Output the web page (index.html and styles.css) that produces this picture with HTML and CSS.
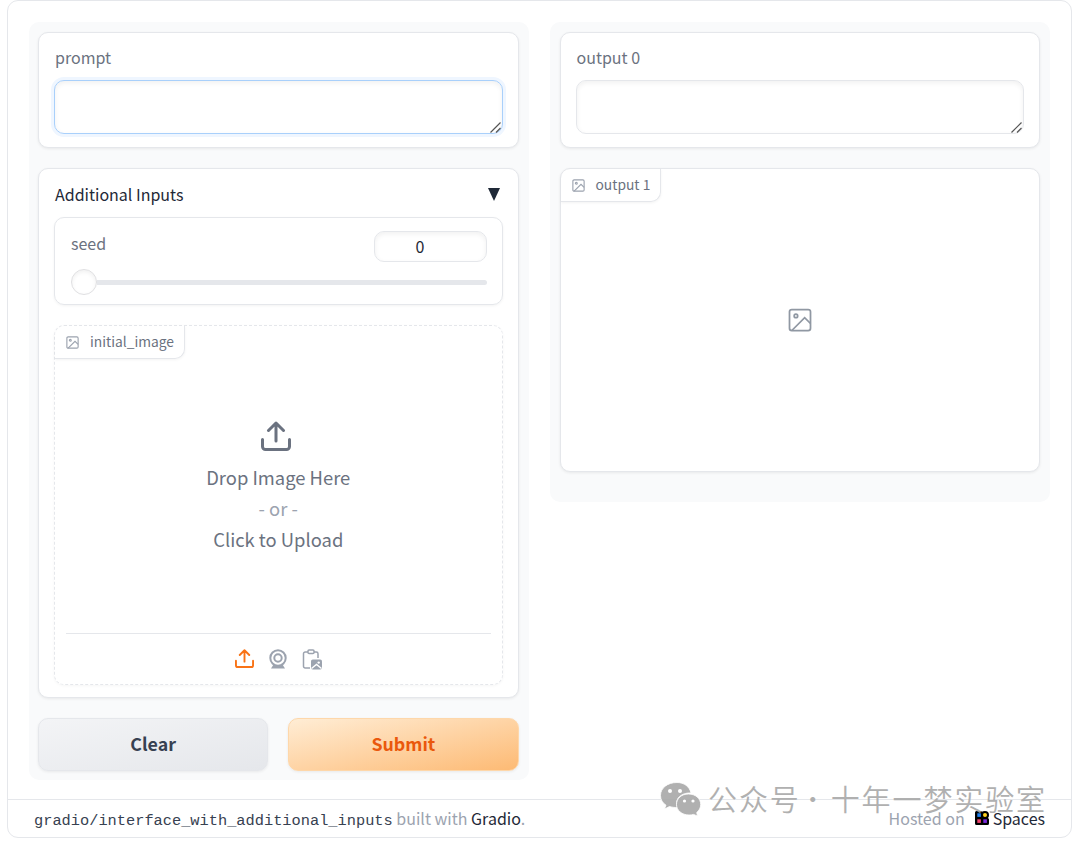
FILE: index.html
```html
<!DOCTYPE html>
<html lang="en">
<head>
    <meta charset="UTF-8">
    <meta name="viewport" content="width=device-width, initial-scale=1.0">
    <title>Interface with additional inputs</title>
    <link rel="stylesheet" href="styles.css">
</head>
<body>

    <!-- Shared icons -->
    <svg class="sprite" width="0" height="0">
        <symbol id="icon-image" viewBox="0 0 24 24">
            <rect x="3" y="3" width="18" height="18" rx="2"/>
            <circle cx="8.5" cy="8.5" r="1.5"/>
            <path d="M21 15l-5-5L5 21"/>
        </symbol>
        <symbol id="icon-upload" viewBox="0 0 30 30">
            <path d="M1.5 18.5v7a3 3 0 0 0 3 3h21a3 3 0 0 0 3-3v-7M15 20V2M7.5 9.500L15 2l7.500 7.500"/>
        </symbol>
        <symbol id="icon-grip" viewBox="0 0 11 11">
            <path d="M.5 10.500l10-10M6 10.500l4.500-4.500"/>
        </symbol>
    </svg>

    <div class="app">
        <main class="columns">
            <section class="panel">
                <div class="block text-block">
                    <label class="label" for="prompt">prompt</label>
                    <div class="field">
                        <textarea id="prompt" class="textbox focused"></textarea>
                        <svg class="grip"><use href="#icon-grip"/></svg>
                    </div>
                </div>

                <div class="block accordion">
                    <div class="accordion-head">
                        <span>Additional Inputs</span>
                        <span class="arrow"></span>
                    </div>

                    <div class="seed">
                        <div class="seed-head">
                            <span class="label">seed</span>
                            <span class="number">0</span>
                        </div>
                        <div class="slider"><span class="thumb"></span><span class="track"></span></div>
                    </div>

                    <div class="upload">
                        <div class="tag">
                            <svg class="tag-icon"><use href="#icon-image"/></svg>
                            <span>initial_image</span>
                        </div>
                        <div class="drop">
                            <svg class="drop-icon"><use href="#icon-upload"/></svg>
                            <span>Drop Image Here</span>
                            <span class="or">- or -</span>
                            <span>Click to Upload</span>
                        </div>
                        <div class="sources">
                            <svg class="source active" viewBox="0 0 30 30"><use href="#icon-upload"/></svg>
                            <svg class="source webcam" viewBox="0 0 20 20">
                                <circle cx="10" cy="9" r="7.700"/>
                                <circle cx="10" cy="9" r="3.700"/>
                                <path class="solid" d="M5.500 15.500Q10 18 14.500 15.500L17 19.500H3z"/>
                            </svg>
                            <svg class="source clipboard" viewBox="0 0 20 20">
                                <path d="M6 3H3.200A1.700 1.700 0 0 0 1.500 4.700v12.600A1.700 1.700 0 0 0 3.200 19H8M12 3h2.300A1.700 1.700 0 0 1 16 4.700V9"/>
                                <rect x="6" y="1" width="6" height="3.500" rx="1"/>
                                <rect class="solid" x="9" y="10.500" width="11" height="10" rx="1.800"/>
                                <circle class="hole" cx="16.700" cy="13.600" r="1.200"/>
                                <path class="hole-line" d="M9.500 19.500l5-4 5 4"/>
                            </svg>
                        </div>
                    </div>
                </div>

                <div class="buttons">
                    <button class="btn clear">Clear</button>
                    <button class="btn submit">Submit</button>
                </div>
            </section>

            <section class="panel outputs">
                <div class="block text-block">
                    <label class="label" for="output">output 0</label>
                    <div class="field">
                        <textarea id="output" class="textbox" readonly></textarea>
                        <svg class="grip"><use href="#icon-grip"/></svg>
                    </div>
                </div>
                <div class="block output-image">
                    <div class="tag">
                        <svg class="tag-icon"><use href="#icon-image"/></svg>
                        <span>output 1</span>
                    </div>
                    <div class="empty">
                        <svg class="empty-icon"><use href="#icon-image"/></svg>
                    </div>
                </div>
            </section>
        </main>

        <footer class="footer">
            <div class="built"><span class="repo">gradio/interface_with_additional_inputs</span> <span>built with <b>Gradio</b>.</span></div>
            <div class="hosted">
                <span>Hosted on</span>
                <svg class="spaces-logo" viewBox="0 0 14 14">
                    <path d="M1.500 0H6l1 .8L8 .3q6-1 6 3.700 0 2-1 3 1 .5 1 1.500v4q0 1.500-1.500 1.500h-11Q0 14 0 12.500v-11Q0 0 1.500 0z" fill="#000"/>
                    <rect x="2.300" y="2.300" width="3.600" height="3.600" fill="#1f80f0"/>
                    <circle cx="10" cy="4" r="2" fill="#ffd21e"/>
                    <rect x="2.300" y="8.300" width="3.600" height="3.600" fill="#f0416c"/>
                    <rect x="8.300" y="8.300" width="3.600" height="3.600" fill="#7a28dc"/>
                </svg>
                <b>Spaces</b>
            </div>
        </footer>
    </div>

    <!-- Watermark over the footer -->
    <div class="watermark" lang="zh">
        <svg class="wechat" viewBox="0 0 41 34">
            <path d="M17 .5C7.500.5.500 6 .5 13.500c0 4.200 2 7.500 5.500 9.700L4.500 27l5-2.500c2 .6 5 1.200 8 1C14 17 21 10.500 31 11 29.500 4.500 24 .5 17 .5z"/>
            <path d="M28.500 12C21.500 12 16.500 16.500 16.500 22.500S22 33 29 33c1.700 0 3-.2 4.500-.6l4 1.600-.8-3.500c2.500-2 4-4.700 4-8C40.700 16.500 35.500 12 28.500 12z"/>
            <g class="eyes">
                <circle cx="10" cy="9" r="2"/>
                <circle cx="20" cy="9" r="2"/>
                <circle cx="24.500" cy="19" r="1.600"/>
                <circle cx="33" cy="19" r="1.600"/>
            </g>
        </svg>
        <span class="wm-name">公众号</span>
        <span class="wm-dot">·</span>
        <span class="wm-name">十年一梦实验室</span>
    </div>

</body>
</html>
```

FILE: styles.css
```css
* {
    box-sizing: border-box;
}
body {
    margin: 0;
    height: 843px;
    overflow: hidden;
    position: relative;
    background: #fff;
    color: #1f2937;
    font-family: "Noto Sans CJK SC", "Open Sans", sans-serif;
    font-size: 16px;
}
.sprite {
    position: absolute;
}
svg {
    display: block;
    fill: none;
    stroke: currentColor;
    flex: none;
}
.app {
    width: 1065px;
    height: 838px;
    margin-left: 7px;
    border: 1px solid #e5e7eb;
    border-radius: 11px;
    display: flex;
    flex-direction: column;
}
.columns {
    flex: 1;
    display: flex;
    align-items: flex-start;
    gap: 21px;
    padding: 21px 21px 0;
}
.panel {
    flex: 1;
    display: flex;
    flex-direction: column;
    gap: 20px;
    padding: 10px 10px 9px 9px;
    background: #f9fafb;
    border-radius: 10px;
}
.outputs {
    height: 480px;
    padding-left: 10px;
}
.block {
    background: #fff;
    border: 1px solid #e5e7eb;
    border-radius: 10px;
    box-shadow: 0 1px 3px rgba(0, 0, 0, .07);
}
.label {
    color: #6b7280;
    line-height: 24px;
}
.text-block {
    height: 116px;
    padding: 12px 15px;
}
.text-block .label {
    display: block;
    padding-left: 1px;
}
.field {
    position: relative;
    margin-top: 11px;
}
.textbox {
    display: block;
    width: 100%;
    height: 54px;
    border: 1px solid #e5e7eb;
    border-radius: 10px;
    outline: none;
    resize: none;
    background: #fff;
    box-shadow: inset 0 2px 5px rgba(0, 0, 0, .06);
}
.textbox.focused {
    border-color: #a9d0fb;
    box-shadow: 0 0 0 3px #eff6ff, inset 0 2px 5px rgba(0, 0, 0, .06);
}
.grip {
    position: absolute;
    right: 2px;
    bottom: 1px;
    width: 11px;
    height: 11px;
    color: #555;
    stroke-width: 1.200;
}

/* Additional inputs */
.accordion {
    height: 530px;
    padding: 12px 15px 0;
}
.accordion-head {
    display: flex;
    align-items: center;
    justify-content: space-between;
    height: 26px;
    margin-bottom: 10px;
    padding-left: 1px;
}
.arrow {
    margin-right: 3px;
    border: 6px solid transparent;
    border-top: 13px solid #1f2937;
    border-bottom: 0;
}
.seed {
    height: 88px;
    padding: 13px 15px 0;
    border: 1px solid #e5e7eb;
    border-radius: 10px;
    box-shadow: 0 1px 3px rgba(0, 0, 0, .05);
}
.seed-head {
    display: flex;
    justify-content: space-between;
    height: 31px;
    padding-left: 1px;
}
.number {
    width: 113px;
    height: 31px;
    padding-right: 20px;
    border: 1px solid #e5e7eb;
    border-radius: 10px;
    box-shadow: inset 0 2px 5px rgba(0, 0, 0, .06);
    line-height: 29px;
    text-align: center;
}
.slider {
    display: flex;
    align-items: center;
    margin-top: 7px;
    padding-left: 1px;
}
.thumb {
    width: 26px;
    height: 26px;
    border: 1px solid #e0e0e2;
    border-radius: 50%;
    box-shadow: inset 0 2px 4px rgba(0, 0, 0, .06);
}
.track {
    flex: 1;
    height: 5px;
    border-radius: 0 3px 3px 0;
    background: #e5e7eb;
}
.upload {
    display: flex;
    flex-direction: column;
    height: 360px;
    margin-top: 20px;
    border: 1px dashed #e5e7eb;
    border-radius: 10px;
    box-shadow: 0 1px 3px rgba(0, 0, 0, .04);
}
.tag {
    display: flex;
    align-items: center;
    align-self: flex-start;
    gap: 10px;
    height: 33px;
    padding: 0 10px 1px;
    border: 1px solid #e5e7eb;
    border-top: 0;
    border-left: 0;
    border-radius: 10px 0 10px 0;
    box-shadow: 0 1px 3px rgba(0, 0, 0, .05);
    color: #6b7280;
    font-size: 13.8px;
    line-height: 32px;
}
.tag span {
    margin-top: -1px;
}
.tag-icon {
    width: 15px;
    height: 15px;
    margin-top: 1px;
    color: #9ca3af;
    stroke-width: 1.800;
}
.drop {
    flex: 1;
    display: flex;
    flex-direction: column;
    align-items: center;
    padding-top: 62px;
    color: #6b7280;
    font-size: 18.4px;
    line-height: 31px;
}
.drop-icon {
    width: 30px;
    height: 30px;
    margin: 0 4px 11px 0;
    stroke-width: 3;
    stroke-linecap: round;
    stroke-linejoin: round;
}
.or {
    color: #9ca3af;
}
.sources {
    display: flex;
    align-items: center;
    justify-content: center;
    gap: 14px;
    height: 51px;
    margin: 0 11px;
    padding-bottom: 1px;
    border-top: 1px solid #e5e7eb;
    color: #9ca3af;
}
.source {
    width: 20px;
    height: 20px;
    stroke-width: 1.500;
}
.source.active {
    width: 19px;
    height: 19px;
    color: #f97316;
    stroke-width: 3;
    stroke-linecap: round;
    stroke-linejoin: round;
}
.webcam {
    stroke-width: 2;
}
.clipboard {
    overflow: visible;
}
.solid {
    fill: currentColor;
    stroke: none;
}
.hole {
    fill: #fff;
    stroke: none;
}
.hole-line {
    stroke: #fff;
}

/* Buttons */
.buttons {
    display: flex;
    gap: 20px;
}
.btn {
    flex: 1;
    height: 53px;
    padding: 0 0 4px;
    border: 1px solid #e5e7eb;
    border-radius: 10px;
    box-shadow: 0 1px 3px rgba(0, 0, 0, .07);
    font-family: inherit;
    font-size: 17.8px;
    font-weight: 600;
}
.clear {
    background: linear-gradient(to bottom right, #f3f4f6, #e5e7eb);
    color: #374151;
}
.submit {
    background: linear-gradient(to bottom right, #ffedd5, #fdba74);
    border-color: #fed7aa;
    color: #ea580c;
}

/* Output image */
.output-image {
    display: flex;
    flex-direction: column;
    height: 304px;
}
.empty {
    flex: 1;
    display: flex;
    justify-content: center;
    padding-top: 104px;
}
.empty-icon {
    width: 28px;
    height: 28px;
    color: #9098a3;
    stroke-width: 1.500;
}

/* Footer */
.footer {
    display: flex;
    justify-content: space-between;
    height: 38px;
    padding: 0 26px;
    border-top: 1px solid #e5e7eb;
    color: #9ca3af;
    line-height: 36px;
}
.footer b {
    color: #1f2937;
    font-weight: 400;
}
.built {
    white-space: nowrap;
}
.repo {
    color: #374151;
    font-family: "Liberation Mono", monospace;
    font-size: 15.33px;
}
.hosted {
    display: flex;
    align-items: center;
    height: 36px;
}
.spaces-logo {
    width: 14px;
    height: 14px;
    margin: 0 4px 1px 10px;
    stroke: none;
}
.watermark {
    position: absolute;
    left: 660px;
    top: 782px;
    display: flex;
    align-items: center;
    height: 34px;
    color: #a8a8a8;
    opacity: .9;
    font-size: 29px;
    font-weight: 350;
    line-height: 32px;
    white-space: nowrap;
}
.watermark span {
    margin-top: -2px;
}
.wechat {
    width: 41px;
    height: 34px;
    margin-right: 7px;
    fill: currentColor;
    stroke: #fff;
    stroke-width: .8;
}
.eyes {
    fill: #fff;
    stroke: none;
}
.wm-name {
    letter-spacing: 1.900px;
}
.wm-dot {
    width: 30px;
    padding-right: 6px;
    font-size: 24px;
    text-align: center;
}
```
